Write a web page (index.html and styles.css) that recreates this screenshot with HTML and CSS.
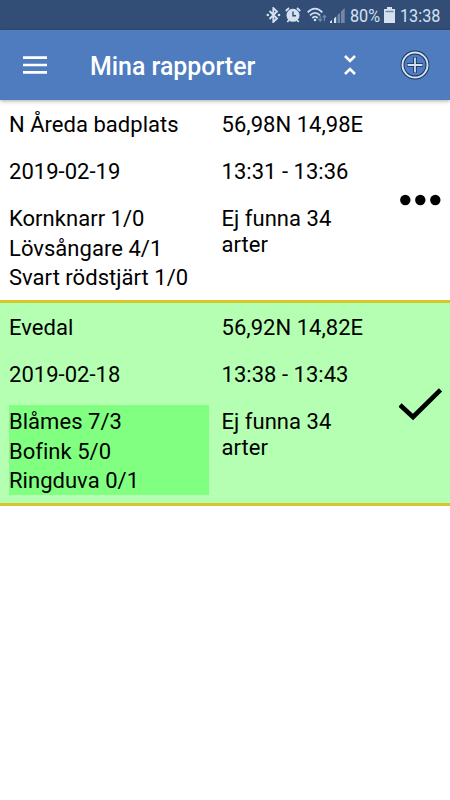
FILE: index.html
```html
<!DOCTYPE html>
<html lang="sv">
<head>
    <meta charset="UTF-8">
    <meta name="viewport" content="width=device-width, initial-scale=1.0">
    <title>Mina rapporter</title>
    <link rel="stylesheet" href="styles.css">
</head>
<body>
    <div class="status-bar">
        <svg class="bluetooth" width="15" height="16" viewBox="0 0 15 16">
            <path d="M3.5 4 L11 11.5 L7.3 15 V1 L11 4.5 L3.5 12" fill="none" stroke="#d5e1f1" stroke-width="1.8"/>
            <circle cx="1.8" cy="8" r="1.3" fill="#d5e1f1"/>
            <circle cx="13" cy="8" r="1.3" fill="#d5e1f1"/>
        </svg>
        <svg class="alarm" width="16" height="16" viewBox="0 0 16 16">
            <circle cx="8" cy="8.3" r="6.5" fill="#d5e1f1"/>
            <path d="M.8 4 L4 1 M15.2 4 L12 1 M4 13 L2.3 15 M12 13 L13.7 15" stroke="#d5e1f1" stroke-width="1.8"/>
            <path d="M8 4.5 V8.8 H11" fill="none" stroke="#304b73" stroke-width="1.4"/>
        </svg>
        <svg class="wifi" width="20" height="16" viewBox="0 0 20 16">
            <path d="M.7 5.4 Q8 -2 15.3 5.4 M3 8.3 Q8 3.3 13 8.3 M5.3 11 Q8 8.3 10.7 11" fill="none" stroke="#d5e1f1" stroke-width="1.8"/>
            <circle cx="8" cy="13" r="1.3" fill="#d5e1f1"/>
            <path d="M13.2 8.5 V14 M11.4 12 L13.2 14 L15 12 M17.4 14 V8.5 M15.6 10.5 L17.4 8.5 L19.2 10.5" fill="none" stroke="#7188ab" stroke-width="1.2"/>
        </svg>
        <svg class="signal" width="15" height="15" viewBox="0 0 15 15">
            <path d="M0 15 V13.5 L2 12 V15 Z M4 15 V10.5 L6.2 8.5 V15 Z" fill="#d5e1f1"/>
            <path d="M7.5 15 V7 L10 4.7 V15 Z M11 15 V3.5 L14.7 0 V15 Z" fill="#7188ab"/>
        </svg>
        <span class="battery-text">80%</span>
        <svg class="battery" width="11" height="16" viewBox="0 0 11 16">
            <path d="M3 0 H8 V2 H11 V16 H0 V2 H3 Z" fill="#d5e1f1"/>
            <path d="M1.5 4.5 H9.5" stroke="#7188ab" stroke-width="1.4"/>
        </svg>
        <span class="clock">13:38</span>
    </div>
    <header class="toolbar">
        <svg class="menu-icon" width="24" height="18" viewBox="0 0 24 18">
            <path d="M0 1.7 H24 M0 9 H24 M0 16.3 H24" stroke="#fff" stroke-width="2.7"/>
        </svg>
        <h1>Mina rapporter</h1>
        <svg class="collapse-icon" width="12" height="22" viewBox="0 0 12 22">
            <path d="M1 2 L6 7 L11 2 M1 20 L6 15 L11 20" fill="none" stroke="#fff" stroke-width="2.6"/>
        </svg>
        <svg class="add-icon" width="30" height="30" viewBox="0 0 30 30">
            <circle cx="15" cy="15" r="12.5" fill="none" stroke="#172f55" stroke-width="3.8"/>
            <circle cx="15" cy="15" r="12.5" fill="none" stroke="#d3e2fa" stroke-width="2"/>
            <path d="M7 15 H23 M15 7 V23" stroke="#172f55" stroke-width="3.4"/>
            <path d="M7.5 15 H22.5 M15 7.5 V22.5" stroke="#d3e2fa" stroke-width="1.8"/>
        </svg>
    </header>
    <main class="reports">
        <section class="report">
            <div class="column">
                <p>N Åreda badplats</p>
                <p>2019-02-19</p>
                <ul class="species">
                    <li>Kornknarr 1/0</li>
                    <li>Lövsångare 4/1</li>
                    <li>Svart rödstjärt 1/0</li>
                </ul>
            </div>
            <div class="column">
                <p>56,98N 14,98E</p>
                <p>13:31 - 13:36</p>
                <p class="not-found">Ej funna 34 arter</p>
            </div>
            <svg class="report-icon" width="44" height="36" viewBox="0 0 44 36">
                <circle cx="6.3" cy="15" r="5.2"/>
                <circle cx="21.3" cy="15" r="5.2"/>
                <circle cx="36.3" cy="15" r="5.2"/>
            </svg>
        </section>
        <section class="report sent">
            <div class="column">
                <p>Evedal</p>
                <p>2019-02-18</p>
                <ul class="species">
                    <li>Blåmes 7/3</li>
                    <li>Bofink 5/0</li>
                    <li>Ringduva 0/1</li>
                </ul>
            </div>
            <div class="column">
                <p>56,92N 14,82E</p>
                <p>13:38 - 13:43</p>
                <p class="not-found">Ej funna 34 arter</p>
            </div>
            <svg class="report-icon" width="44" height="36" viewBox="0 0 44 36">
                <path d="M1 17 L14 29 L41.5 1.8" fill="none" stroke="#000" stroke-width="4.6"/>
            </svg>
        </section>
    </main>
</body>
</html>
```
FILE: styles.css
```css
* {
    box-sizing: border-box;
}

body {
    margin: 0;
    font-family: Roboto, sans-serif;
    background-color: #fff;
    color: #000;
}

.status-bar {
    display: flex;
    align-items: center;
    height: 30px;
    padding-left: 266px;
    background-color: #324e77;
    color: #d5e1f1;
    font-size: 18px;
    line-height: 30px;
    white-space: nowrap;
}

.status-bar svg,
.status-bar span {
    flex-shrink: 0;
}

.alarm {
    margin-left: 4px;
}

.wifi {
    margin-left: 6px;
}

.signal {
    margin-left: 3px;
}

.battery-text,
.clock {
    padding-top: 1px;
    transform: scaleX(0.9);
    transform-origin: left;
}

.battery-text {
    width: 29px;
    margin-left: 5px;
}

.battery {
    margin-left: 5px;
}

.clock {
    margin-left: 5px;
}

.toolbar {
    display: flex;
    align-items: center;
    height: 70px;
    padding: 0 20px 0 23px;
    background-color: #4e7cbe;
    color: #fff;
    box-shadow: 0 1px 4px rgba(0, 0, 0, 0.35);
}

.toolbar h1 {
    width: 254px;
    margin: 2px 0 0 43px;
    font-size: 24.9px;
    font-weight: 500;
}

.add-icon {
    margin-left: 44px;
}

.report {
    display: grid;
    grid-template-columns: 200px 165px 44px;
    column-gap: 12.5px;
    height: 203px;
    padding: 12px 0 0 9px;
    border-bottom: 3px solid #d6c52b;
    font-size: 22px;
    letter-spacing: 0.03px;
    line-height: 26px;
}

.report p {
    margin: 0 0 21px;
}

.species {
    height: 90px;
    margin: -4px 0 0;
    padding: 2px 0 0;
    list-style: none;
    line-height: 29.6px;
}

.sent {
    background-color: #b4ffb2;
}

.sent .species {
    background-color: #80ff80;
}

.report .not-found {
    width: 130px;
    margin: 0;
}

.report-icon {
    margin-top: 73px;
}
```
